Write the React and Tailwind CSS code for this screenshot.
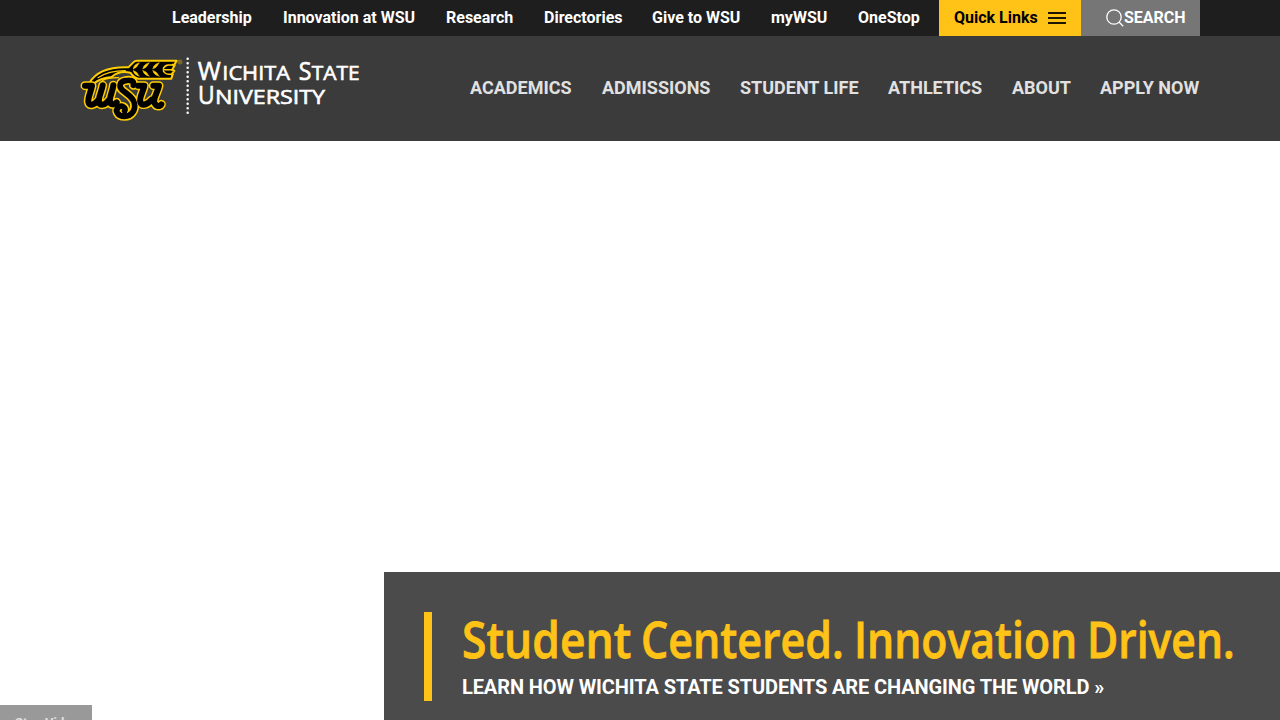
import React from "react";

const topLinks = [
  ["Leadership", "w-[81px]"],
  ["Innovation at WSU", "w-[133px]"],
  ["Research", "w-[68px]"],
  ["Directories", "w-[78px]"],
  ["Give to WSU", "w-[89px]"],
  ["myWSU", "w-[57px]"],
  ["OneStop", "w-[62px]"],
];

const mainLinks = [
  ["ACADEMICS", "w-[102px]"],
  ["ADMISSIONS", "w-[108px]"],
  ["STUDENT LIFE", "w-[118px]"],
  ["ATHLETICS", "w-[94px]"],
  ["ABOUT", "w-[58px]"],
  ["APPLY NOW", "w-[100px]"],
];

const headline = [
  ["Student", 169],
  ["Centered.", 203],
  ["Innovation", 223],
  ["Driven.", 148],
];

const letters = [
  "M45 122 H66 C62 143 53 158 55 171 C57 184 72 181 83 167 M98 121 C95 141 84 158 87 171 C90 184 105 181 116 166 M130 121 C128 140 117 158 120 170 C122 181 132 180 140 172",
  "M204 122 H223 C219 142 207 158 211 171 C215 184 231 180 245 164 M250 122 H267 C263 142 249 160 253 172 C257 185 269 186 274 178",
];
const sShape =
  "M190 121 C194 106 178 104 166 107 C147 110 146 127 159 137 C171 147 189 156 193 174 C198 197 183 214 164 214 C142 214 134 196 145 187 C155 179 170 188 164 198";
const leaf =
  "M58 114 C78 80 118 65 175 67 L190 52 Q194 47 202 47 H320 L313 59 H308 L314 61 L306 75 L313 77 L305 88 H308 L304 101 H205 Q193 100 181 83 C160 79 141 81 125 96 C117 98 98 96 72 115 Z";

function Logo() {
  return (
    <svg className="h-[70px] w-[282px]" viewBox="30 30 846 210" aria-label="Wichita State University">
      <g strokeLinejoin="round" strokeLinecap="round">
        <path d={leaf} fill="#000" stroke="#ffcd00" strokeWidth="6" />
        <path d="M84 98 C108 82 134 77 166 77" fill="none" stroke="#ffcd00" strokeWidth="3.5" />
        <path d="M98 106 C112 98 124 98 146 98" fill="none" stroke="#ffcd00" strokeWidth="4" />
        <g fill="#ffcd00" stroke="#ffcd00" strokeWidth="1.5">
          <path d="M190 71 C191 61 198 56 208 53 C202 61 203 67 190 71 Z M190 77 C191 86 198 90 208 94 C202 86 203 80 190 77 Z" />
          <path d="M219 71 C220 61 227 56 238 53 C231 61 232 67 219 71 Z M219 77 C220 86 227 90 238 94 C231 86 232 80 219 77 Z" />
          <path d="M249 71 C250 61 257 56 268 53 C261 61 262 67 249 71 Z M249 77 C250 86 257 90 268 94 C261 86 262 80 249 77 Z" />
        </g>
        <path d="M280 74 H308 M280 70 Q285 61 295 60 H314 M280 78 Q285 87 295 88 H308" fill="none" stroke="#ffcd00" strokeWidth="4.5" />
        <g fill="none">
          {letters.map((d) => (
            <path key={d} d={d} stroke="#ffcd00" strokeWidth="27" />
          ))}
          <path d={sShape} stroke="#ffcd00" strokeWidth="27" />
          {letters.map((d) => (
            <path key={d} d={d} stroke="#000" strokeWidth="18" />
          ))}
          <path d={sShape} stroke="#000" strokeWidth="17" />
        </g>
      </g>
      <circle cx="330" cy="51" r="6" fill="none" stroke="#b89b16" strokeWidth="2" />
      <path d="M328 54V48h3q2 2-1 3l2 3" fill="none" stroke="#b89b16" strokeWidth="1.5" />
      <path d="M353 41 V206" stroke="#fff" strokeWidth="7.5" strokeLinecap="round" strokeDasharray="0 13.5" />
      <g transform="translate(330 0)" fill="#fff" stroke="#fff" strokeWidth="1.8" fontFamily="'Open Sans', sans-serif" fontWeight="500">
        <text x="53" y="105" fontSize="74" textLength="69" lengthAdjust="spacingAndGlyphs">W</text>
        <text x="127" y="105" fontSize="60" textLength="203" lengthAdjust="spacingAndGlyphs">ICHITA</text>
        <text x="356" y="105" fontSize="74" textLength="38" lengthAdjust="spacingAndGlyphs">S</text>
        <text x="395" y="105" fontSize="60" textLength="144" lengthAdjust="spacingAndGlyphs">TATE</text>
        <text x="54" y="176" fontSize="74" textLength="50" lengthAdjust="spacingAndGlyphs">U</text>
        <text x="105" y="176" fontSize="60" textLength="330" lengthAdjust="spacingAndGlyphs">NIVERSITY</text>
      </g>
    </svg>
  );
}

function fitWord(el) {
  if (el) el.style.transform = `scaleX(${Number(el.dataset.width) / el.offsetWidth})`;
}

export default function App() {
  return (
    <div className="flex h-[720px] w-full flex-col overflow-hidden bg-white font-['Roboto',sans-serif]">
      <div className="flex h-9 shrink-0 justify-end bg-[#1e1e1e] pr-20">
        <nav className="mr-[19px] flex items-center gap-[30px] text-base font-bold leading-9 text-white">
          {topLinks.map(([label, width]) => (
            <a key={label} className={`${width} whitespace-nowrap`}>{label}</a>
          ))}
        </nav>
        <button className="flex w-[142px] items-center gap-[10px] bg-[#ffc217] pl-[15px] text-base font-bold text-black">
          <span className="whitespace-nowrap">Quick Links</span>
          <svg className="h-3 w-[18px] shrink-0" viewBox="0 0 18 12" fill="#1c1600">
            <path d="M0 0h18v2H0zM0 5h18v2H0zM0 10h18v2H0z" />
          </svg>
        </button>
        <button className="flex w-[119px] items-center bg-[#767676] pl-[25px] text-base font-bold text-white">
          <svg className="h-[18px] w-[18px] shrink-0" viewBox="0 0 18 18" fill="none" stroke="white" strokeWidth="1.3">
            <circle cx="8" cy="8" r="7.2" />
            <path d="M13 13l4.2 4.2" />
          </svg>
          SEARCH
        </button>
      </div>

      <header className="flex h-[105px] shrink-0 justify-between bg-[#3b3b3b] pl-20 pr-20 pt-[19px]">
        <Logo />
        <nav className="flex h-[66px] items-center gap-[30px] text-lg font-bold text-[#e1e1e1]">
          {mainLinks.map(([label, width]) => (
            <a key={label} className={`${width} whitespace-nowrap`}>{label}</a>
          ))}
        </nav>
      </header>

      <main className="flex flex-1 items-end justify-between">
        <button className="flex h-[15px] w-[92px] items-start overflow-hidden whitespace-nowrap bg-[#999] pl-[15px] pt-[9px] text-left text-[13px] font-bold leading-[17px] text-[#e0e0e0]">
          Stop Video
        </button>
        <section className="flex h-[148px] w-[896px] bg-[#4b4b4b] pl-10 pt-10">
          <div className="h-[89px] w-2 shrink-0 bg-[#ffc217]" />
          <div className="w-[818px] pl-[30px]">
            <h1 className="flex h-[58px] gap-[10px] whitespace-nowrap font-['Open_Sans',sans-serif] text-[51px] font-semibold leading-[52px] text-[#ffc217] [-webkit-text-stroke:0.8px_#ffc217]">
              {headline.map(([word, width]) => (
                <span key={word} className="block shrink-0" style={{ width }}>
                  <span ref={fitWord} data-width={width} className="inline-block origin-left">{word}</span>
                </span>
              ))}
            </h1>
            <p className="whitespace-nowrap text-xl font-bold leading-[35px] tracking-[-0.11px] text-white">
              LEARN HOW WICHITA STATE STUDENTS ARE CHANGING THE WORLD »
            </p>
          </div>
        </section>
      </main>
    </div>
  );
}
